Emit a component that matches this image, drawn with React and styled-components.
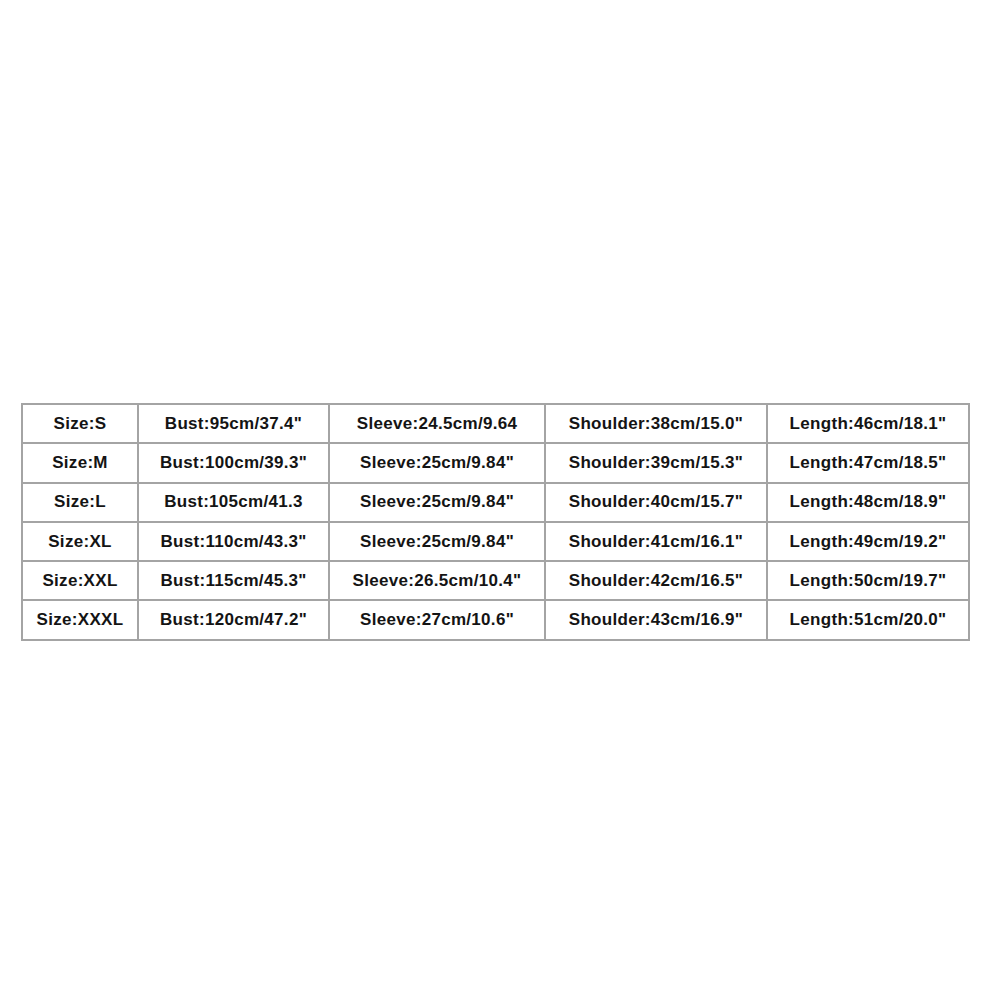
import React from "react";
import styled, { createGlobalStyle } from "styled-components";

const Global = createGlobalStyle`
  html, body { margin: 0; padding: 0; background: #ffffff; }
  body { font-family: "Liberation Sans", Arial, sans-serif; }
`;

const Page = styled.div`
  width: 1000px;
  height: 1000px;
  box-sizing: border-box;
  padding: 403px 0 0 21px;
  background: #fff;
`;

const Table = styled.table`
  border-collapse: collapse;
  table-layout: fixed;
  width: 947px;
  border: 2px solid #a4a4a4;
`;

const Row = styled.tr`
  height: 39.3px;
`;

const Cell = styled.td`
  border: 2px solid #a4a4a4;
  padding: 0;
  text-align: center;
  vertical-align: middle;
  font-family: "Liberation Sans", Arial, sans-serif;
  font-weight: 700;
  font-size: 17px;
  letter-spacing: 0.3px;
  color: #141414;
  white-space: nowrap;
  overflow: hidden;
`;

const widths = [116, 191, 216, 222, 202];

const rows = [
  ["Size:S", "Bust:95cm/37.4\"", "Sleeve:24.5cm/9.64", "Shoulder:38cm/15.0\"", "Length:46cm/18.1\""],
  ["Size:M", "Bust:100cm/39.3\"", "Sleeve:25cm/9.84\"", "Shoulder:39cm/15.3\"", "Length:47cm/18.5\""],
  ["Size:L", "Bust:105cm/41.3", "Sleeve:25cm/9.84\"", "Shoulder:40cm/15.7\"", "Length:48cm/18.9\""],
  ["Size:XL", "Bust:110cm/43.3\"", "Sleeve:25cm/9.84\"", "Shoulder:41cm/16.1\"", "Length:49cm/19.2\""],
  ["Size:XXL", "Bust:115cm/45.3\"", "Sleeve:26.5cm/10.4\"", "Shoulder:42cm/16.5\"", "Length:50cm/19.7\""],
  ["Size:XXXL", "Bust:120cm/47.2\"", "Sleeve:27cm/10.6\"", "Shoulder:43cm/16.9\"", "Length:51cm/20.0\""],
];

export default function App() {
  return (
    <Page>
      <Global />
      <Table>
        <colgroup>
          {widths.map((w, i) => (
            <col key={i} style={{ width: w }} />
          ))}
        </colgroup>
        <tbody>
          {rows.map((r, i) => (
            <Row key={i}>
              {r.map((c, j) => (
                <Cell key={j}>{c}</Cell>
              ))}
            </Row>
          ))}
        </tbody>
      </Table>
    </Page>
  );
}
